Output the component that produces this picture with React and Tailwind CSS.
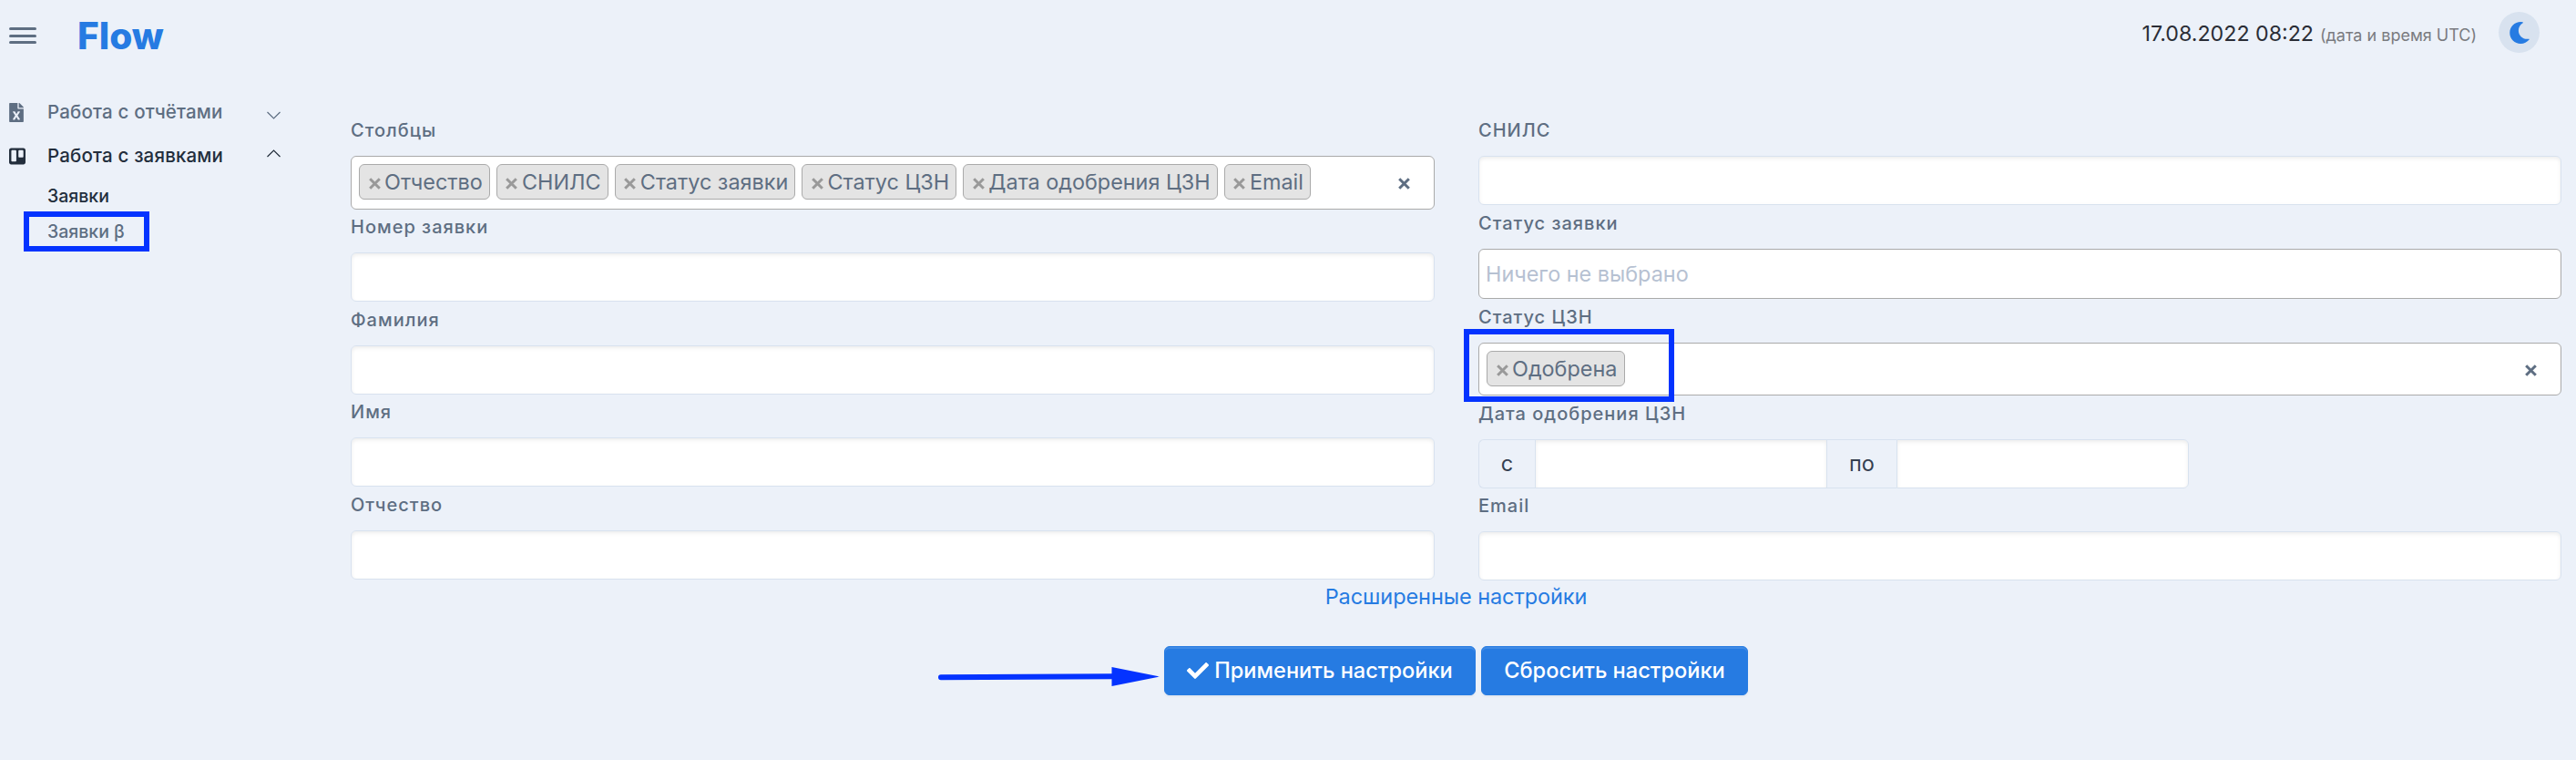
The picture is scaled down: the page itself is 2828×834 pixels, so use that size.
import React from 'react';
import { FaFileExcel, FaTrello, FaMoon, FaCheck } from 'react-icons/fa';

function Cross({ className = '' }) {
  return (
    <svg viewBox="0 0 13 13" className={`h-[13px] w-[13px] shrink-0 ${className}`} fill="none" stroke="currentColor" strokeWidth="3">
      <path d="M1.2 1.2 11.8 11.8M11.8 1.2 1.2 11.8" />
    </svg>
  );
}

function Chevron({ up }) {
  return (
    <svg viewBox="0 0 15 9" className={up ? 'mb-[5px] h-[9px] w-[15px]' : 'mt-[7px] h-[9px] w-[15px]'} fill="none" stroke="currentColor" strokeWidth="1.2">
      <path d={up ? 'M0.5 8 7.5 1 14.5 8' : 'M0.5 1 7.5 8 14.5 1'} />
    </svg>
  );
}

function Label({ children, className = 'h-12' }) {
  return (
    <div className={`flex items-center pb-[9px] text-[20px] font-medium leading-none tracking-[1px] text-[#5e6e82] ${className}`}>
      {children}
    </div>
  );
}

function Input({ className = 'w-full rounded-md' }) {
  return (
    <div className={`h-[54px] border border-[#d8e2ef] bg-white shadow-[inset_0_2px_4px_rgba(0,0,0,0.075)] ${className}`} />
  );
}

function Chip({ children }) {
  return (
    <span className="flex h-[39px] items-center rounded-md border border-[#aaa] bg-[#e4e4e4] pl-[9.5px] pr-[7.2px] text-[23.4px] leading-none text-[#5e6e82]">
      <Cross className="mr-[4.5px] mt-1 text-[#999]" />
      {children}
    </span>
  );
}

function MultiSelect({ items, className }) {
  return (
    <div className={`flex w-full items-start justify-between rounded-md border border-[#aaa] bg-white pl-2 pr-[26px] pt-2 ${className}`}>
      <div className="flex gap-[7px]">
        {items.map((t) => (
          <Chip key={t}>{t}</Chip>
        ))}
      </div>
      <Cross className="mt-[15px] text-[#5e6e82]" />
    </div>
  );
}

function Addon({ children, className }) {
  return (
    <div className={`flex h-[54px] items-center justify-center border border-r-0 border-[#d8e2ef] text-[23.5px] leading-none text-[#344050] ${className}`}>
      {children}
    </div>
  );
}

function Button({ children, className }) {
  return (
    <button className={`flex h-[54px] items-center justify-center rounded-md border border-[#267be2] bg-[#267be2] text-[23.6px] font-medium leading-none text-white shadow-[inset_0_2px_0_rgba(255,255,255,0.12),0_2px_2px_rgba(0,0,0,0.04)] ${className}`}>
      {children}
    </button>
  );
}

const columns = ['Отчество', 'СНИЛС', 'Статус заявки', 'Статус ЦЗН', 'Дата одобрения ЦЗН', 'Email'];

export default function App() {
  return (
    <div className="relative h-[834px] w-[2828px] overflow-hidden bg-[#ecf1f9] font-['Inter',sans-serif]">
      <header className="flex h-[75px] items-start justify-between pl-2.5 pr-10">
        <div className="flex items-start">
          <div className="mt-[30px] flex w-[30px] flex-col gap-[4.5px]">
            <span className="h-[3px] rounded-full bg-[#5e6e82]" />
            <span className="h-[3px] rounded-full bg-[#5e6e82]" />
            <span className="h-[3px] rounded-full bg-[#5e6e82]" />
          </div>
          <div className="ml-[45px] mt-5 text-[40.5px] font-extrabold leading-10 text-[#267be2]">Flow</div>
        </div>
        <div className="flex items-start pt-[13px]">
          <div className="mr-6 flex items-baseline pt-3 leading-6">
            <span className="text-[23.2px] text-[#2a2d36]">17.08.2022 08:22</span>
            <span className="ml-[7px] text-[18px] text-[#7a7b80]">(дата и время UTC)</span>
          </div>
          <div className="flex h-[45px] w-[45px] items-center justify-center rounded-full bg-[#d8e2ef]">
            <FaMoon className="h-6 w-6 text-[#267be2]" />
          </div>
        </div>
      </header>

      <div className="flex">
        <nav className="flex w-[385px] shrink-0 flex-col pl-2.5 pt-6 font-medium leading-none">
          <div className="flex h-12 items-center text-[20.5px] tracking-[0.18px] text-[#5e6e82]">
            <FaFileExcel className="h-[21px] w-4" />
            <span className="ml-[26px] w-[241px]">Работа с отчётами</span>
            <Chevron />
          </div>
          <div className="flex h-12 items-center text-[20.5px] tracking-[0.18px] text-[#232e3c]">
            <FaTrello className="h-[21px] w-[18px]" />
            <span className="ml-6 w-[241px]">Работа с заявками</span>
            <Chevron up />
          </div>
          <div className="flex h-[41px] items-center pl-[42px] text-[19.5px] text-[#232e3c]">Заявки</div>
          <div className="flex h-[37px] items-center pl-[42px] text-[19.5px] text-[#5e6e82]">Заявки β</div>
        </nav>

        <main className="w-[2427px] pt-12">
          <div className="flex gap-12">
            <div className="w-[1190px]">
              <Label>Столбцы</Label>
              <MultiSelect items={columns} className="h-[59px]" />
              <Label className="h-[47px]">Номер заявки</Label>
              <Input />
              <Label>Фамилия</Label>
              <Input />
              <Label className="h-[47px]">Имя</Label>
              <Input />
              <Label>Отчество</Label>
              <Input />
            </div>
            <div className="w-[1189px]">
              <Label>СНИЛС</Label>
              <Input />
              <Label>Статус заявки</Label>
              <div className="flex h-[55px] items-center rounded-md border border-[#aaa] bg-white pl-[7px] text-[23.4px] leading-none text-[#b6c1d2]">
                Ничего не выбрано
              </div>
              <Label>Статус ЦЗН</Label>
              <MultiSelect items={['Одобрена']} className="h-[58px]" />
              <Label>Дата одобрения ЦЗН</Label>
              <div className="flex">
                <Addon className="w-[62px] rounded-l-md">с</Addon>
                <Input className="w-[321px]" />
                <Addon className="w-[76px] border-l-0">по</Addon>
                <Input className="w-[321px] rounded-r-md" />
              </div>
              <Label className="h-[47px]">Email</Label>
              <Input />
            </div>
          </div>
          <div className="mt-0.5 flex h-8 items-center justify-center text-[23.5px] leading-none tracking-[-0.07px] text-[#267be2]">
            Расширенные настройки
          </div>
          <div className="mt-[38px] flex justify-center gap-1.5">
            <Button className="w-[342px]">
              <FaCheck className="mr-1.5 h-6 w-6" />
              Применить настройки
            </Button>
            <Button className="w-[293px]">Сбросить настройки</Button>
          </div>
        </main>
      </div>

      <div className="absolute left-[26px] top-[232px] h-11 w-[138px] border-[6px] border-[#0433ff]" />
      <div className="absolute left-[1607px] top-[361px] h-20 w-[231px] border-[6px] border-[#0433ff]" />
      <svg className="absolute left-[1029px] top-[730px] h-[26px] w-[246px]" viewBox="0 0 246 26">
        <path d="M4 13.2 192 12.3" stroke="#0433ff" strokeWidth="6" strokeLinecap="round" />
        <path d="M191.5 2v21L244 12.5Z" fill="#0433ff" />
      </svg>
    </div>
  );
}
